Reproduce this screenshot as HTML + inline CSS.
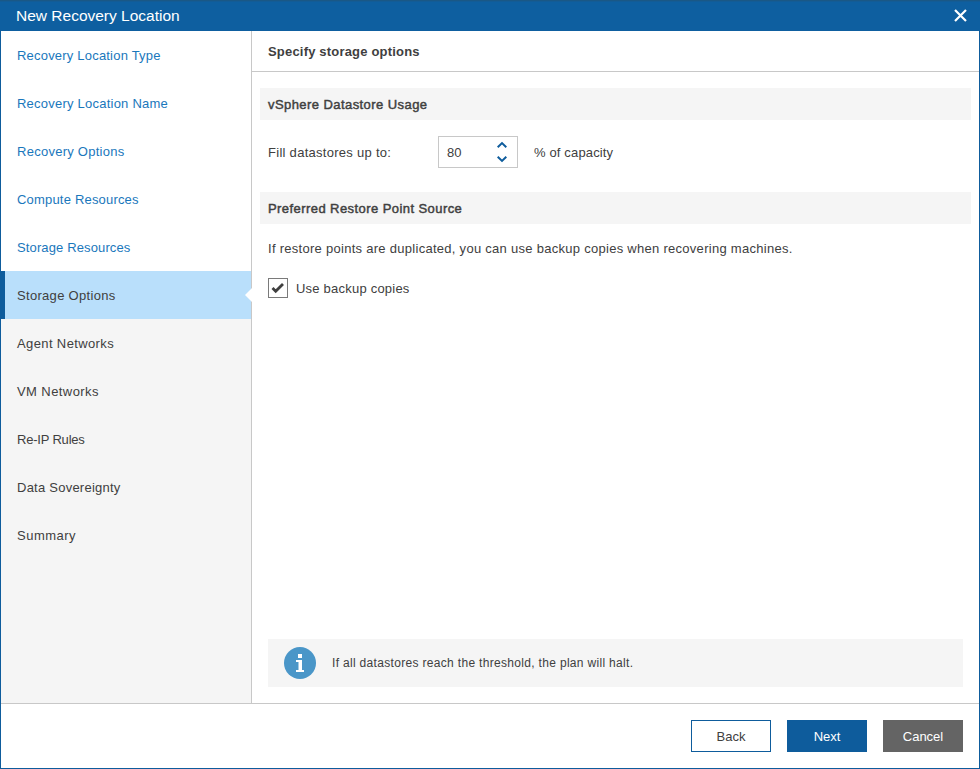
<!DOCTYPE html>
<html><head><meta charset="utf-8">
<style>
*{box-sizing:border-box;margin:0;padding:0}
html,body{width:980px;height:769px;overflow:hidden;background:#fff}
body{font-family:"Liberation Sans",sans-serif;position:relative}
.win{position:absolute;left:0;top:0;width:980px;height:769px;border:1px solid #0e5c9c;border-top:0;background:#fff}
.title{position:absolute;left:0;top:0;width:980px;height:31px;background:linear-gradient(#1a5886 0,#1a5886 1px,#135c96 1px,#135c96 2px,#0e5fa0 2px);color:#fff;font-size:15px}
.title .t{position:absolute;left:16px;top:7px;white-space:nowrap;letter-spacing:0px;font-size:15.5px}
.title .x{position:absolute;left:953.5px;top:8.5px;width:13px;height:13px}
.side{position:absolute;left:1px;top:31px;width:251px;height:672px;background:#f5f5f5;border-right:1px solid #c8c8c8}
.side .top{position:absolute;left:0;top:0;width:250px;height:240px;background:#fff}
.item{position:absolute;left:0;width:250px;height:48px;font-size:13px;white-space:nowrap}
.item span{position:absolute;left:16px;top:17px}
.done{color:#1a77bc}
.todo{color:#404040}
.sel{background:#b9dffb;color:#404040}
.sel:before{content:"";position:absolute;left:0;top:0;width:4px;height:48px;background:#0e5c9c}
.notch{position:absolute;right:-1px;top:17px;width:0;height:0;border-top:7px solid transparent;border-bottom:7px solid transparent;border-right:7px solid #fff}
.hdr{position:absolute;left:252px;top:31px;width:727px;height:41px;border-bottom:1px solid #c8c8c8}
.hdr span{position:absolute;left:16px;top:13px;font-size:13px;font-weight:bold;color:#404040;white-space:nowrap}
.sec{position:absolute;left:260px;width:711px;height:32px;background:#f5f5f5}
.sec span{position:absolute;left:8px;top:9px;font-size:13px;font-weight:normal;-webkit-text-stroke:0.45px #404040;color:#404040;white-space:nowrap;letter-spacing:0.43px}
.txt{position:absolute;font-size:13px;color:#404040;white-space:nowrap}
.spin{position:absolute;left:438px;top:136px;width:80px;height:32px;border:1px solid #c8c8c8;background:#fff}
.chk{position:absolute;left:268px;top:278px;width:20px;height:20px;border:1px solid #7a7a7a;background:#fff}
.info{position:absolute;left:268px;top:639px;width:695px;height:48px;background:#f5f5f5}
.foot{position:absolute;left:1px;top:703px;width:978px;height:1px;background:#c8c8c8}
.btn{position:absolute;top:720px;width:80px;height:32px;font-size:13px;text-align:center;line-height:32px;padding-top:0px}
</style></head><body>
<div class="win"></div>
<div class="title"><span class="t">New Recovery Location</span>
<svg class="x" viewBox="0 0 13 13"><path d="M1 1L12 12M12 1L1 12" stroke="#fff" stroke-width="2.2"/></svg></div>

<div class="side">
<div class="top"></div>
<div class="item done" style="top:0"><span style="letter-spacing:0.2px">Recovery Location Type</span></div>
<div class="item done" style="top:48px"><span style="letter-spacing:0.23px">Recovery Location Name</span></div>
<div class="item done" style="top:96px"><span style="letter-spacing:0.26px">Recovery Options</span></div>
<div class="item done" style="top:144px"><span style="letter-spacing:0.19px">Compute Resources</span></div>
<div class="item done" style="top:192px"><span style="letter-spacing:0.13px">Storage Resources</span></div>
<div class="item sel" style="top:240px"><span style="letter-spacing:0.31px">Storage Options</span><div class="notch"></div></div>
<div class="item todo" style="top:288px"><span style="letter-spacing:0.38px">Agent Networks</span></div>
<div class="item todo" style="top:336px"><span style="letter-spacing:0.42px">VM Networks</span></div>
<div class="item todo" style="top:384px"><span style="letter-spacing:-0.2px">Re-IP Rules</span></div>
<div class="item todo" style="top:432px"><span style="letter-spacing:0.24px">Data Sovereignty</span></div>
<div class="item todo" style="top:480px"><span style="letter-spacing:0.5px">Summary</span></div>
</div>

<div class="hdr"><span style="letter-spacing:0.19px">Specify storage options</span></div>
<div class="sec" style="top:88px"><span>vSphere Datastore Usage</span></div>
<div class="txt" style="left:268px;top:145px;letter-spacing:0.28px">Fill datastores up to:</div>
<div class="spin"><span class="txt" style="left:8px;top:8px">80</span>
<svg style="position:absolute;left:56px;top:3px" width="14" height="24" viewBox="0 0 14 24"><path d="M2.7 7.3L7 3.1L11.3 7.3M2.7 16.7L7 20.9L11.3 16.7" fill="none" stroke="#0e5c9c" stroke-width="2"/></svg></div>
<div class="txt" style="left:534px;top:145px;letter-spacing:0.15px">% of capacity</div>
<div class="sec" style="top:192px"><span>Preferred Restore Point Source</span></div>
<div class="txt" style="left:268px;top:241px;letter-spacing:0.28px">If restore points are duplicated, you can use backup copies when recovering machines.</div>
<div class="chk"><svg width="18" height="18" viewBox="0 0 18 18"><path d="M3.5 9L6.7 12.2L14 4.9" fill="none" stroke="#404040" stroke-width="2.8"/></svg></div>
<div class="txt" style="left:296px;top:281px;letter-spacing:0.22px">Use backup copies</div>

<div class="info">
<svg style="position:absolute;left:16px;top:8px" width="32" height="32" viewBox="0 0 32 32"><circle cx="16" cy="16" r="16" fill="#4a96c8"/><rect x="14" y="7" width="4" height="4" fill="#fff"/><path d="M12 13H18V23H20V25H12V23H14.5V15H12Z" fill="#fff"/></svg>
<span class="txt" style="left:64px;top:17px;font-size:12px;letter-spacing:0.32px">If all datastores reach the threshold, the plan will halt.</span>
</div>

<div class="foot"></div>
<div class="btn" style="left:691px;border:1px solid #0e5c9c;color:#404040;background:#fff">Back</div>
<div class="btn" style="left:787px;background:#0e5c9c;color:#fff;padding-top:1px">Next</div>
<div class="btn" style="left:883px;background:#646464;color:#fff;padding-top:1px">Cancel</div>
</body></html>
